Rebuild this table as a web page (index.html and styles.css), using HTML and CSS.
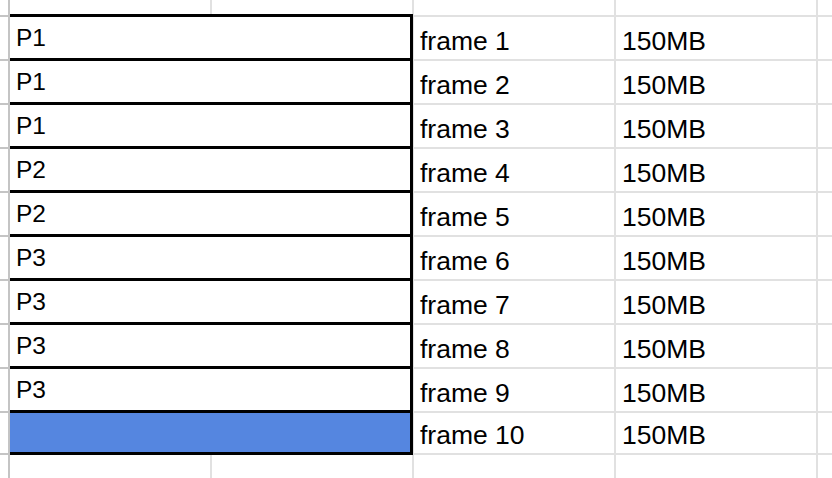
FILE: index.html
```html
<!DOCTYPE html>
<html>
<head>
<meta charset="utf-8">
<link rel="stylesheet" href="styles.css">
</head>
<body>
<div class="sheet">
  <div class="stub"></div><div class="cell"></div><div class="cell"></div><div class="cell"></div><div class="cell"></div><div class="cell"></div>

  <div class="stub"></div><div class="merged"><span class="ptext">P1</span></div><div class="cell val">frame 1</div><div class="cell val">150MB</div><div class="cell"></div>
  <div class="stub"></div><div class="merged"><span class="ptext">P1</span></div><div class="cell val">frame 2</div><div class="cell val">150MB</div><div class="cell"></div>
  <div class="stub"></div><div class="merged"><span class="ptext">P1</span></div><div class="cell val">frame 3</div><div class="cell val">150MB</div><div class="cell"></div>
  <div class="stub"></div><div class="merged"><span class="ptext">P2</span></div><div class="cell val">frame 4</div><div class="cell val">150MB</div><div class="cell"></div>
  <div class="stub"></div><div class="merged"><span class="ptext">P2</span></div><div class="cell val">frame 5</div><div class="cell val">150MB</div><div class="cell"></div>
  <div class="stub"></div><div class="merged"><span class="ptext">P3</span></div><div class="cell val">frame 6</div><div class="cell val">150MB</div><div class="cell"></div>
  <div class="stub"></div><div class="merged"><span class="ptext">P3</span></div><div class="cell val">frame 7</div><div class="cell val">150MB</div><div class="cell"></div>
  <div class="stub"></div><div class="merged"><span class="ptext">P3</span></div><div class="cell val">frame 8</div><div class="cell val">150MB</div><div class="cell"></div>
  <div class="stub"></div><div class="merged"><span class="ptext">P3</span></div><div class="cell val">frame 9</div><div class="cell val">150MB</div><div class="cell"></div>
  <div class="stub"></div><div class="merged blue"></div><div class="cell val">frame 10</div><div class="cell val">150MB</div><div class="cell"></div>

  <div class="stub"></div><div class="cell"></div><div class="cell"></div><div class="cell"></div><div class="cell"></div><div class="cell"></div>
</div>
</body>
</html>
```

FILE: styles.css
```css
html, body {
  margin: 0;
  padding: 0;
  background: #ffffff;
}

.sheet {
  display: grid;
  grid-template-columns: 8px 200px 200px 200px 200px 14px;
  grid-template-rows: 15px repeat(9, 42px) 40px 1fr;
  gap: 2px;
  height: 478px;
  width: 832px;
  overflow: hidden;
  background: #e1e1e1;
  font-family: "Liberation Sans", Arial, sans-serif;
  color: #000;
}

.stub {
  background: #fff;
  box-shadow: 2px 0 0 #c4c4c4, 0 2px 0 #c4c4c4, 2px 2px 0 #c4c4c4;
}

.cell {
  background: #fff;
}

.val {
  display: flex;
  align-items: flex-end;
  padding: 0 0 3px 6px;
  font-size: 26.5px;
  line-height: 30px;
  white-space: nowrap;
}

.merged {
  grid-column: span 2;
  position: relative;
  background: #fff;
  padding: 7px 0 0 6px;
  font-size: 24.5px;
  line-height: 28px;
}

.merged::after {
  content: "";
  position: absolute;
  top: -3px;
  right: -1px;
  bottom: -2px;
  left: 0;
  border-top: 3px solid #000;
  border-right: 3px solid #000;
  border-bottom: 3px solid #000;
}

.blue {
  background: #5586e0;
}
```
